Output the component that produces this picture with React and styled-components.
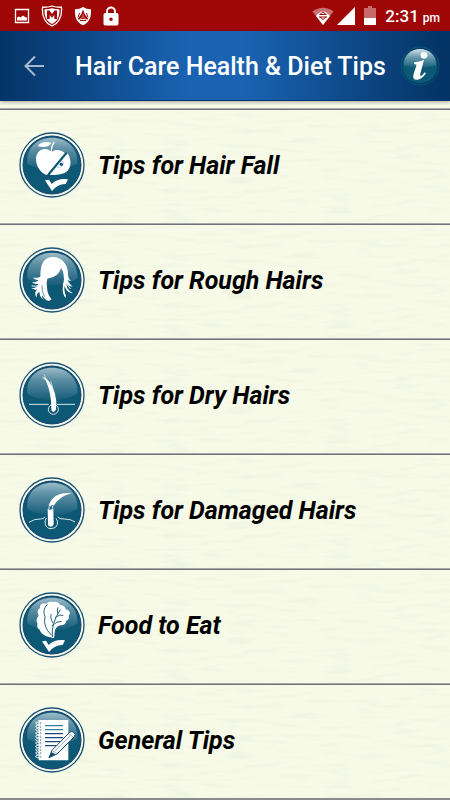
import React from "react";
import styled, { createGlobalStyle } from "styled-components";

const paper = `url("data:image/svg+xml,${encodeURIComponent(
  `<svg xmlns="http://www.w3.org/2000/svg" width="450" height="115"><filter id="g" x="0" y="0" width="100%" height="100%"><feTurbulence type="fractalNoise" baseFrequency="0.03 0.2" numOctaves="2" seed="8" stitchTiles="stitch"/><feColorMatrix values="0 0 0 0 0.85 0 0 0 0 0.88 0 0 0 0 0.75 2 0 0 0 -1"/></filter><rect width="450" height="115" filter="url(#g)"/></svg>`
)}")`;

const GlobalStyle = createGlobalStyle`
  * { box-sizing: border-box; }
  body {
    margin: 0;
    background: #f6fae7;
    font-family: Roboto, "Liberation Sans", sans-serif;
  }
`;

const Screen = styled.div`
  min-height: 100vh;
  overflow: hidden;
`;

const StatusBar = styled.div`
  display: flex;
  align-items: center;
  justify-content: space-between;
  height: 31px;
  padding: 0 10px 0 14px;
  background: #9f0707;
  color: #fff;
`;

const StatusGroup = styled.div`
  display: flex;
  align-items: center;
  gap: ${({ $gap }) => $gap}px;
`;

const Clock = styled.time`
  padding-top: 2px;
  font-size: 17px;
  line-height: 24px;
  font-weight: 500;
  white-space: nowrap;

  small {
    margin-left: 4px;
    font-size: 12px;
  }
`;

const AppBar = styled.header`
  position: relative;
  display: flex;
  align-items: center;
  height: 70px;
  padding: 0 10px 0 20px;
  background: linear-gradient(90deg, #043466 0%, #1a63b2 42%, #1a63b2 54%, #043466 98%);
  border-bottom: 1px solid #06316f;
  box-shadow: 0 1px 4px rgba(0, 0, 0, 0.35);
  color: #fff;
`;

const IconButton = styled.button`
  display: flex;
  padding: 0;
  border: 0;
  background: none;
  cursor: pointer;
`;

const Title = styled.h1`
  flex: 1;
  margin: 0 0 0 27px;
  padding-top: 3px;
  font-size: 25px;
  line-height: 32px;
  font-weight: 500;
  white-space: nowrap;
`;

const TipList = styled.ul`
  margin: 0;
  padding: 7px 0 0;
  list-style: none;
`;

const TipItem = styled.li`
  border-top: 1px solid #a9aaa5;
  box-shadow: inset 0 1px #74717c;
  background: ${paper};

  &:last-child {
    border-bottom: 2px solid #8b8a8d;
  }
`;

const TipButton = styled.button`
  display: flex;
  align-items: center;
  gap: 13px;
  width: 100%;
  height: 114px;
  padding: 0 19px 2px;
  border: 0;
  background: none;
  color: #000;
  font: italic 700 25px/32px Roboto, "Liberation Sans", sans-serif;
  text-align: left;
  cursor: pointer;
`;

const TipLabel = styled.span`
  padding-top: 2px;
`;

const PictureIcon = () => (
  <svg width="16" height="16" viewBox="0 0 16 16" fill="none" aria-hidden="true">
    <path d="M1.500 1.500h13v13h-13z" stroke="#fff" strokeWidth="1.300" />
    <path d="M3 12.500V9.500l2-1 1.500 1 2.500-2 2 1.500 2 .5v3z" fill="#fff" />
  </svg>
);

const ShieldM = () => (
  <svg width="22" height="22" viewBox="0 0 22 22" fill="none" aria-hidden="true">
    <path d="M11 1C8 2 5 2.400 1.500 2.200 1 9 2 17 11 21 20 17 21 9 20.500 2.200 17 2.400 14 2 11 1z" stroke="#fff" strokeWidth="1.300" />
    <path d="M11 3.200C8.500 4 6 4.300 3.500 4.200 3.300 10 4.700 16.200 11 19 17.300 16.200 18.700 10 18.500 4.200 16 4.300 13.500 4 11 3.200z" fill="#fff" />
    <path d="M6 14V5.500h2.500L11 9l2.500-3.500H16V14h-2.700V9.800L11 13 8.700 9.800V14z" fill="#9f0707" />
  </svg>
);

const ShieldEmblem = () => (
  <svg width="18" height="20" viewBox="0 0 18 20" aria-hidden="true">
    <path d="M9 .8C6.500 2.600 4 3.200 1 3.200 0.800 10 1.500 16 9 19.200 16.500 16 17.200 10 17 3.200 14 3.200 11.500 2.600 9 .8z" fill="#fff" />
    <path d="M9 3.500l1.700 4.500 3.800 5.500-5.500-.5-5.500.5L7.300 8z" fill="#9f0707" />
    <path d="M5.500 7L4 11.500M12.500 7l1.500 4.500M6 14.500h6" stroke="#9f0707" strokeWidth="1" />
    <path d="M9 8v3l-3 2M9 11l3 2" fill="none" stroke="#e3b5b5" strokeWidth=".7" />
  </svg>
);

const LockIcon = () => (
  <svg width="16" height="20" viewBox="0 0 16 20" fill="none" aria-hidden="true">
    <path d="M4 8V5.500a4 4 0 0 1 8 0V8" stroke="#fff" strokeWidth="2" />
    <rect x="0.500" y="7" width="15" height="12.500" rx="1.700" fill="#fff" />
    <circle cx="8" cy="13.200" r="1.700" fill="#9f0707" />
  </svg>
);

const WifiIcon = () => (
  <svg width="22" height="18" viewBox="0 0 22 18" fill="none" aria-hidden="true">
    <path d="M11 18L.5 4.500Q11-3 21.500 4.500z" fill="#c96f6f" />
    <path d="M11 18L4 9Q11 0 18 9z" fill="#fff" />
    <path d="M7.500 7.500h7M7 10h8M8 7.500L11 5l3 2.500M8 10l3 2.500 3-2.500" stroke="#9f0707" strokeWidth="1" />
  </svg>
);

const SignalIcon = () => (
  <svg width="18" height="18" viewBox="0 0 18 18" aria-hidden="true">
    <path d="M18 0v18H0z" fill="#fff" />
  </svg>
);

const BatteryIcon = () => (
  <svg width="12" height="19" viewBox="0 0 12 19" aria-hidden="true">
    <path d="M4 0h4v2h4v17H0V2h4z" fill="#c96a6a" />
    <path d="M0 12h12v7H0z" fill="#fff" />
  </svg>
);

const BackArrow = () => (
  <svg width="28" height="28" viewBox="0 0 28 28" fill="none" aria-hidden="true">
    <path d="M24 14H6M15 4.500L5.500 14l9.500 9.500" stroke="#a7bad0" strokeWidth="2" />
  </svg>
);

const InfoBadge = () => (
  <svg width="40" height="40" viewBox="0 0 120 120" aria-hidden="true">
    <defs>
      <linearGradient id="info-shine" x1="0" y1="0" x2="0" y2="1">
        <stop offset="0" stopColor="#d5e2e8" />
        <stop offset="0.400" stopColor="#6f9fb0" />
        <stop offset="1" stopColor="#156079" />
      </linearGradient>
    </defs>
    <circle cx="60" cy="60" r="57" fill="none" stroke="#0d5a78" strokeWidth="2.500" />
    <circle cx="60" cy="60" r="52" fill="#0b5974" />
    <path d="M12 58C9 28 34 9 60 9s51 19 48 49Q60 73 12 58z" fill="url(#info-shine)" />
    <circle cx="72" cy="28" r="10" fill="#fff" />
    <path d="M43 49Q57 47 72 42L61 83Q59 91 63 90Q68 88 74 79L78 82Q63 104 48 101Q36 99 41 83L49 59Q51 54 42 54z" fill="#fff" />
  </svg>
);

const Disc = ({ children }) => (
  <svg width="66" height="66" viewBox="27 35 198 198" aria-hidden="true">
    <defs>
      <linearGradient id="disc-shine" x1="0" y1="0" x2="0" y2="1">
        <stop offset="0" stopColor="#9dbbc8" />
        <stop offset="0.350" stopColor="#5e90a5" />
        <stop offset="1" stopColor="#145c79" />
      </linearGradient>
    </defs>
    <circle cx="126" cy="134" r="96" fill="#f5f9ea" stroke="#195478" strokeWidth="4" />
    <circle cx="126" cy="134" r="87" fill="#0d5875" stroke="#123f70" strokeWidth="3" />
    <path d="M52 130C46 82 82 52 126 52s80 30 76 78Q166 150 126 150T52 130z" fill="url(#disc-shine)" />
    {children}
  </svg>
);

const Check = () => (
  <path d="M105 180L117 178 125 191Q143 173 174 177L167 191Q144 190 126 212z" fill="#fff" />
);

const Apple = () => (
  <Disc>
    <path d="M125 95C112 78 79 84 78 115c0 24 15 44 33 49l53-66c-11-10-28-12-39-3z" fill="#fff" />
    <path d="M83 77Q95 61 124 67 113 86 83 77z" fill="#fff" />
    <path d="M124 92V85" stroke="#4b8299" strokeWidth="8" />
    <path d="M124 97Q123 78 133 65" fill="none" stroke="#fff" strokeWidth="4" />
    <path d="M119 163L173 99C189 126 181 151 162 159Q139 167 119 163z" fill="#fff" />
    <path d="M114 163L170 97" stroke="#0d5875" strokeWidth="5" />
    <path d="M142 142Q144 126 160 123 163 141 142 142z" fill="none" stroke="#a8c3ce" strokeWidth="2" />
    <circle cx="154" cy="132" r="5" fill="#0d5875" />
    <Check />
  </Disc>
);

const RoughHair = () => (
  <Disc>
    <path d="M91 124Q90 65 128 65C153 64 172 85 174 111Q173 132 184 137L172 135Q181 149 188 154 178 153 169 145L172 158Q178 168 188 174 176 173 168 162L163 152Q161 170 168 188 158 180 158 160L162 132Q161 106 153 99 146 126 112 130 109 140 111 155 112 178 125 192L117 197Q101 194 98 180 93 190 105 194 89 189 88 169 80 173 79 187 71 171 82 162 75 165 64 159 83 158 85 145 76 149 65 141 82 141 85 134 79 136 68 127 82 129 91 124z" fill="#fff" />
    <path d="M166 137Q170 148 181 160M160 145Q158 165 166 182M99 175Q108 190 122 192M89 148Q76 156 66 152" fill="none" stroke="#fff" strokeWidth="3" strokeLinecap="round" />
    <path d="M96 150Q94 170 104 184" fill="none" stroke="#0d5875" strokeWidth="2" />
  </Disc>
);

const DryHair = () => (
  <Disc>
    <path d="M57 162h59M140 162h55" stroke="#dce8e9" strokeWidth="3" />
    <circle cx="130" cy="177" r="15" fill="#0d5875" stroke="#d8e7e9" strokeWidth="3" />
    <path d="M107 82Q135 108 139 153L138 177Q136 185 130 185 123 184 124 173 124 127 107 90L99 82z" fill="#fff" />
    <path d="M108 88L103 72M111 92L97 80M118 103L109 92M128 112L122 92" stroke="#e4eeee" strokeWidth="2" />
  </Disc>
);

const DamagedHair = () => (
  <Disc>
    <path d="M57 171Q73 160 91 161Q103 161 105 154M143 154Q147 162 163 161Q183 161 195 170M109 158Q103 166 106 177 110 190 123 190 138 190 142 178 145 166 138 159" fill="none" stroke="#d8e7e9" strokeWidth="3" />
    <path d="M113 130L120 134 130 130 131 176Q130 184 123 184 115 184 114 176z" fill="#fff" />
    <path d="M116 120Q132 78 186 84 151 90 131 121L126 118 121 124z" fill="#fff" />
    <path d="M117 123v10M128 121v9" stroke="#d8e7e9" strokeWidth="3" />
  </Disc>
);

const Lettuce = () => (
  <Disc>
    <path d="M109 168Q93 160 89 148C79 144 83 135 82 128 77 119 81 112 86 106 80 94 83 86 91 83 86 72 100 68 109 70 115 62 127 64 132 65 141 63 147 68 151 74 163 75 167 82 167 87 182 91 182 100 176 106 180 117 171 119 169 121 168 131 160 134 152 135 142 136 137 145 135 150L132 174z" fill="#fff" />
    <path d="M112 72Q96 89 105 109 98 139 124 164M127 170Q123 129 151 88M129 128Q119 111 124 101M125 137Q140 122 155 123M136 111Q151 101 160 105M143 99Q141 88 144 81" fill="none" stroke="#22647d" strokeWidth="3" />
    <g transform="translate(-9 3)"><Check /></g>
  </Disc>
);

const Notepad = () => (
  <Disc>
    <path d="M86 74h89v121H86z" fill="#fff" />
    {Array.from({ length: 11 }, (_, i) => (
      <g key={i}>
        <circle cx="91" cy={84 + i * 10} r="3" fill="#41788e" />
        <path d={`M92 ${84 + i * 10}c-9-6-18-4-14 1q5 5 12 0`} fill="none" stroke="#fff" strokeWidth="3" />
      </g>
    ))}
    <path d="M105 91h54M105 103h54" stroke="#2f8296" strokeWidth="3.500" />
    <path d="M105 115h54M105 127h54M105 139h47M105 151h34" stroke="#1d4778" strokeWidth="3.500" />
    <path d="M117 187L126 165 178 112Q184 105 192 111 198 117 193 124L141 176z" fill="#fff" stroke="#164b70" strokeWidth="3" />
    <path d="M126 165L141 176M133 169L181 121M174 115L190 125" fill="none" stroke="#6b8fa6" strokeWidth="2" />
    <path d="M124 170L137 177 117 187z" fill="#164b70" />
  </Disc>
);

const tips = [
  { label: "Tips for Hair Fall", Icon: Apple },
  { label: "Tips for Rough Hairs", Icon: RoughHair },
  { label: "Tips for Dry Hairs", Icon: DryHair },
  { label: "Tips for Damaged Hairs", Icon: DamagedHair },
  { label: "Food to Eat", Icon: Lettuce },
  { label: "General Tips", Icon: Notepad },
];

export default function App() {
  return (
    <Screen>
      <GlobalStyle />
      <StatusBar>
        <StatusGroup $gap={11}>
          <PictureIcon />
          <ShieldM />
          <ShieldEmblem />
          <LockIcon />
        </StatusGroup>
        <StatusGroup $gap={9}>
          <StatusGroup $gap={3}>
            <WifiIcon />
            <SignalIcon />
          </StatusGroup>
          <BatteryIcon />
          <Clock>
            2:31<small>pm</small>
          </Clock>
        </StatusGroup>
      </StatusBar>
      <AppBar>
        <IconButton type="button" aria-label="Back">
          <BackArrow />
        </IconButton>
        <Title>Hair Care Health &amp; Diet Tips</Title>
        <IconButton type="button" aria-label="Information">
          <InfoBadge />
        </IconButton>
      </AppBar>
      <main>
        <TipList>
          {tips.map(({ label, Icon }) => (
            <TipItem key={label}>
              <TipButton type="button">
                <Icon />
                <TipLabel>{label}</TipLabel>
              </TipButton>
            </TipItem>
          ))}
        </TipList>
      </main>
    </Screen>
  );
}
